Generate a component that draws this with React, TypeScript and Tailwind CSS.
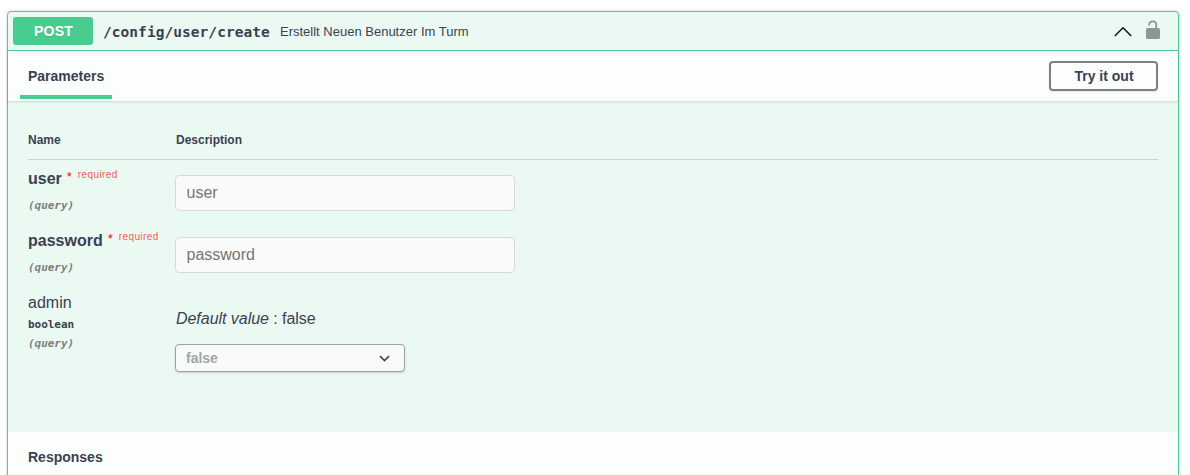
import type { ReactNode } from "react";

const mono = "font-['DejaVu_Sans_Mono',monospace]";

function TextField({ name }: { name: string }) {
  return (
    <input
      disabled
      placeholder={name}
      className="mt-[5px] block h-9 w-[340px] rounded-[4px] border border-[#d9d9d9] bg-[#fafafa] px-[10.5px] text-[16px] placeholder:text-[#757575]"
    />
  );
}

function ParamRow({
  name,
  required,
  type,
  height,
  children,
}: {
  name: string;
  required?: boolean;
  type?: string;
  height: string;
  children: ReactNode;
}) {
  return (
    <div className={`flex ${height}`}>
      <div className="w-[147px] shrink-0">
        <div className="flex h-[18px] items-start whitespace-nowrap text-[16px] leading-[18px]">
          <span className={required ? "font-bold" : ""}>{name}</span>
          {required && (
            <>
              <span className="ml-[5px] text-[13px] leading-[14px] text-[#ff0000]">*</span>
              <span className="ml-[6px] text-[10px] leading-[10px] tracking-[0.4px] text-[#f55c5a]">required</span>
            </>
          )}
        </div>
        {type ? (
          <div className={`${mono} mt-[6px] h-[14px] text-[11px] font-bold leading-[14px] tracking-[-0.04px]`}>{type}</div>
        ) : null}
        <div
          className={`${mono} ${type ? "mt-[5px]" : "mt-[11px]"} h-[14px] text-[11px] font-bold italic leading-[14px] tracking-[-0.04px] text-[#808080]`}
        >
          (query)
        </div>
      </div>
      <div>{children}</div>
    </div>
  );
}

export default function App() {
  return (
    <div className="h-[475px] overflow-hidden bg-white pl-[7px] pt-[11px] font-['Liberation_Sans',Arial,sans-serif] text-[#3b4151]">
      <section className="h-[490px] w-[1172px] rounded-[4px] border border-[#49cc90] bg-[#ebf9f3] shadow-[0_0_3px_rgba(0,0,0,0.19)]">
        <header className="flex h-[39px] items-center border-b border-[#49cc90] pl-[5px] pr-[17px]">
          <span className="flex h-7 w-20 items-center justify-center rounded-[3px] bg-[#49cc90] pl-px text-[14px] font-bold tracking-[0.2px] text-white [text-shadow:0_1px_0_rgba(0,0,0,0.1)]">
            POST
          </span>
          <span className={`${mono} ml-[10px] mt-[2px] w-[167px] whitespace-nowrap text-[14.5px] font-bold leading-[18px] tracking-[0.05px]`}>
            /config/user/create
          </span>
          <span className="ml-[10px] mt-px text-[13px]">Erstellt Neuen Benutzer Im Turm</span>
          <svg className="ml-auto mt-px h-[12px] w-[19px]" viewBox="0 0 19 12" fill="none" stroke="#111" strokeWidth="1.5">
            <path d="M.8 10 9 1.8 17.2 10" />
          </svg>
          <svg className="mb-[3px] ml-[12px] h-[19px] w-[16px]" viewBox="0 0 16 19">
            <path d="M4.2 5.4V4.4C4.2 2.5 5.7 1.4 7.7 1.4s3.5 1.3 3.5 3.2V9" fill="none" stroke="#8d9692" strokeWidth="1.8" />
            <rect x="1" y="8" width="14" height="11" rx="1.7" fill="#8d9692" />
          </svg>
        </header>

        <div className="flex h-[50px] items-center justify-between bg-[#fcfefd] pl-[12px] pr-[20px] shadow-[0_1px_2px_rgba(0,0,0,0.14)]">
          <div className="flex h-full w-[92px] flex-col">
            <h4 className="flex h-[44px] items-center pl-[8px] pt-[6px] text-[14px] font-bold">
              Parameters
            </h4>
            <div className="h-1 bg-[#49cc90]" />
          </div>
          <button className="h-[30px] w-[109px] rounded-[4px] border-2 border-[#808080] pl-px text-[14px] font-bold shadow-[0_1px_2px_rgba(0,0,0,0.1)]">
            Try it out
          </button>
        </div>

        <div className="h-[331px] px-[20px]">
          <div className="flex h-[59px] items-end border-b border-[#c7d4d0] pb-[11px] text-[12px] font-bold leading-4">
            <div className="w-[148px]">Name</div>
            <div>Description</div>
          </div>
          <div className="pt-[10px]">
            <ParamRow name="user" required height="h-[62px]">
              <TextField name="user" />
            </ParamRow>
            <ParamRow name="password" required height="h-[62px]">
              <TextField name="password" />
            </ParamRow>
            <ParamRow name="admin" type="boolean" height="h-[100px]">
              <p className="ml-px mt-[16px] h-[18px] text-[16px] leading-[18px] tracking-[-0.04px]">
                <i>Default value</i> : false
              </p>
              <div className="mt-[16px] flex h-[28px] w-[230px] items-center justify-between rounded-[4px] border border-[#9da29f] bg-[#f7faf9] pl-[10px] pr-[14.5px] text-[14px] font-bold text-[#a3a6a5] shadow-[0_1px_2px_rgba(0,0,0,0.15)]">
                false
                <svg className="h-[7px] w-[11px]" viewBox="0 0 11 7" fill="none" stroke="#45494b" strokeWidth="1.7">
                  <path d="M1 1.2 5.5 5.5 10 1.2" />
                </svg>
              </div>
            </ParamRow>
          </div>
        </div>

        <div className="flex h-[50px] items-center bg-[#fcfefd] px-[20px] text-[14px] font-bold">
          Responses
        </div>
      </section>
    </div>
  );
}
